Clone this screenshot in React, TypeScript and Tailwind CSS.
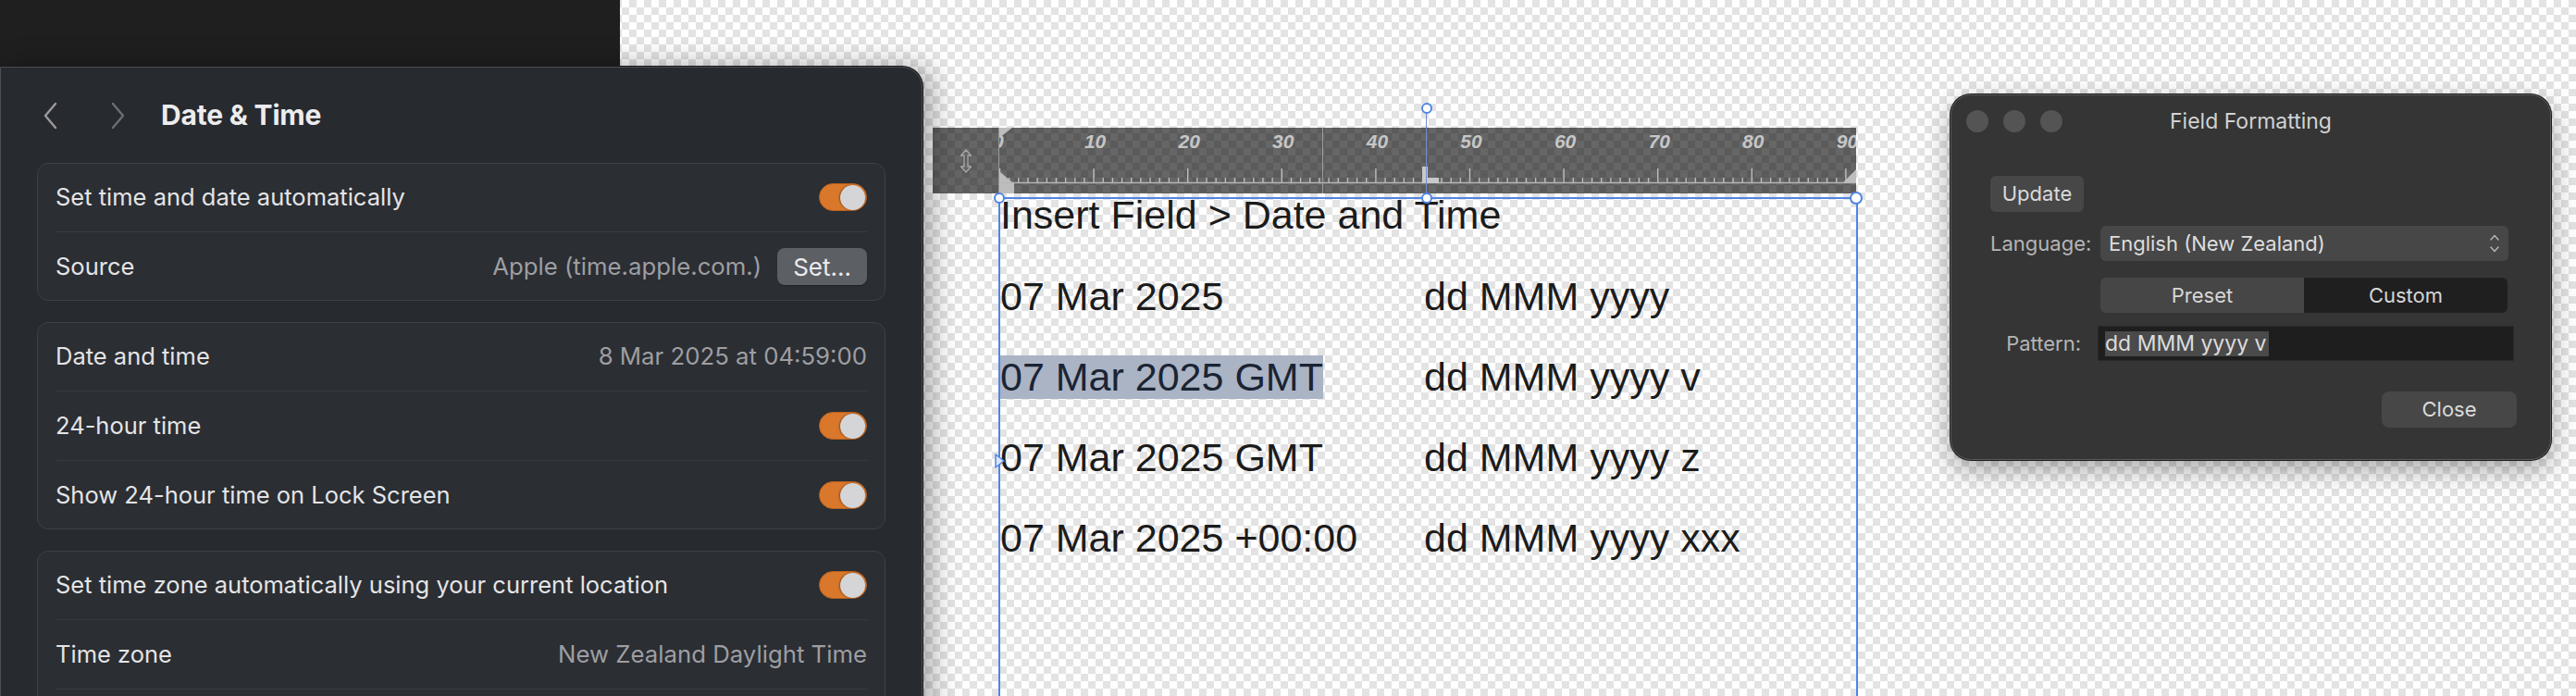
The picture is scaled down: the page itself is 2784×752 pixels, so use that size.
import React from "react";

const ui = "font-['Inter','Noto_Sans',sans-serif]";
const doc = "font-['Liberation_Sans',Arial,sans-serif]";

function Toggle() {
  return (
    <div className="flex h-[30px] w-[52px] items-center justify-end rounded-full border border-[#b8611f] bg-[#d9772b] p-[1px]">
      <div className="h-[27px] w-[27px] rounded-full bg-[#d5d5d7] shadow-[-1px_0_2px_rgba(0,0,0,0.35)]" />
    </div>
  );
}

function Sep() {
  return <div className="mx-[19px] my-[1px] h-px bg-[#383b40]" />;
}

function Row({ label, children }: { label?: string; children?: React.ReactNode }) {
  return (
    <div className="flex h-[72px] items-center justify-between px-[19px]">
      <span className="text-[25.5px] text-[#e4e4e6]">{label}</span>
      <div className="flex items-center gap-[17px]">{children}</div>
    </div>
  );
}

function Value({ text }: { text: string }) {
  return <span className="text-[25.75px] text-[#9e9ea2]">{text}</span>;
}

function Group({ children }: { children: React.ReactNode }) {
  return <div className="rounded-[12px] border border-[#3d4045] bg-[#2b2e33]">{children}</div>;
}

function SettingsWindow() {
  return (
    <div
      className={`absolute left-0 top-[72px] h-[720px] w-[997px] rounded-tr-[22px] border border-[#4b4e53] bg-[#272a2f] shadow-[0_0_0_1px_#151515,10px_0_30px_rgba(0,0,0,0.35)] ${ui}`}
    >
      <div className="flex h-[103px] items-center pl-[44px]">
        <svg width="20" height="30" viewBox="0 0 20 30" className="text-[#9a9a9e]">
          <path d="M15 2 L4 15 L15 28" fill="none" stroke="currentColor" strokeWidth="2.4" strokeLinecap="round" strokeLinejoin="round" />
        </svg>
        <svg width="20" height="30" viewBox="0 0 20 30" className="ml-[52px] text-[#6d6e72]">
          <path d="M5 2 L16 15 L5 28" fill="none" stroke="currentColor" strokeWidth="2.4" strokeLinecap="round" strokeLinejoin="round" />
        </svg>
        <span className="ml-[37px] text-[30px] font-bold tracking-[-0.2px] text-[#ececee]">Date &amp; Time</span>
      </div>
      <div className="flex flex-col gap-[23px] px-[39px]">
        <Group>
          <Row label="Set time and date automatically">
            <Toggle />
          </Row>
          <Sep />
          <Row label="Source">
            <Value text="Apple (time.apple.com.)" />
            <div className="flex h-[40px] items-center rounded-[8px] bg-[#5c5f64] px-[17px] text-[26px] text-[#ebebed] shadow-[0_1px_1px_rgba(0,0,0,0.3)]">
              Set...
            </div>
          </Row>
        </Group>
        <Group>
          <Row label="Date and time">
            <Value text="8 Mar 2025 at 04:59:00" />
          </Row>
          <Sep />
          <Row label="24-hour time">
            <Toggle />
          </Row>
          <Sep />
          <Row label="Show 24-hour time on Lock Screen">
            <Toggle />
          </Row>
        </Group>
        <Group>
          <Row label="Set time zone automatically using your current location">
            <Toggle />
          </Row>
          <Sep />
          <Row label="Time zone">
            <Value text="New Zealand Daylight Time" />
          </Row>
          <Sep />
          <Row />
        </Group>
      </div>
    </div>
  );
}

function Ruler() {
  const ticks = [];
  for (let i = 0; i <= 91; i++) {
    const x = i * 10.16;
    const major = i % 10 === 0;
    ticks.push(
      <line key={i} x1={x + 0.5} x2={x + 0.5} y1={major ? 44 : 54} y2={59} stroke="#bdbdbd" strokeWidth={1.4} />
    );
  }
  const nums = [10, 20, 30, 40, 50, 60, 70, 80, 90];
  return (
    <div className="absolute left-[1008px] top-[138px] flex h-[71px] w-[998px] bg-black/60">
      <div className="flex w-[72px] items-center justify-center border-r border-[#9a9a9a]">
        <svg width="14" height="26" viewBox="0 0 14 26">
          <path
            d="M7 1 L12.5 7 L9 7 L9 19 L12.5 19 L7 25 L1.5 19 L5 19 L5 7 L1.5 7 Z"
            fill="none"
            stroke="#a8a8a8"
            strokeWidth="1.3"
            strokeLinejoin="round"
          />
        </svg>
      </div>
      <svg width="926" height="71" viewBox="0 0 926 71" className="block">
        <text x="-7" y="22" fill="#c6c6c6" fontSize="21" fontWeight="bold" fontStyle="italic" fontFamily="Liberation Sans, Arial, sans-serif">
          0
        </text>
        {nums.map((n) => (
          <text
            key={n}
            x={n * 10.16 + 2}
            y="22"
            textAnchor="middle"
            fill="#c6c6c6"
            fontSize="21"
            fontWeight="bold"
            fontStyle="italic"
            fontFamily="Liberation Sans, Arial, sans-serif"
          >
            {n}
          </text>
        ))}
        <line x1="0" x2="926" y1="59.5" y2="59.5" stroke="#b5b5b5" strokeWidth="1.5" />
        {ticks}
        <line x1="349.5" x2="349.5" y1="0" y2="71" stroke="#9c9c9c" strokeWidth="1" />
        <path d="M0 0 L14 0 L0 11 Z" fill="#bdbdbd" />
        <path d="M0 47 L14 59 L0 59 Z" fill="#bdbdbd" />
        <rect x="0" y="60" width="16" height="11" fill="#bdbdbd" />
        <path d="M457 42 L463 42 L463 54 L475 54 L475 60 L457 60 Z" fill="#c8c8c8" />
        <path d="M926 45 L926 59 L912 59 Z" fill="#bdbdbd" />
      </svg>
    </div>
  );
}

function TextFrame() {
  const rows: [string, string, boolean][] = [
    ["07 Mar 2025", "dd MMM yyyy", false],
    ["07 Mar 2025 GMT", "dd MMM yyyy v", true],
    ["07 Mar 2025 GMT", "dd MMM yyyy z", false],
    ["07 Mar 2025 +00:00", "dd MMM yyyy xxx", false],
  ];
  return (
    <>
      {/* rotation handle */}
      <div className="absolute left-[1541px] top-[122px] h-[92px] w-px bg-[#6f8fcf]" />
      <div className="absolute left-[1536px] top-[111px] h-[12px] w-[12px] rounded-full border-2 border-[#4f86e4] bg-white" />
      <div className={`absolute left-[1079px] top-[213px] h-[560px] w-[929px] border-x-2 border-t-2 border-[#4f86e4] ${doc} text-[43px] text-[#1b1b1b]`}>
        <div className="h-[34px] leading-[34px]">Insert Field &gt; Date and Time</div>
        <div className="mt-[28px]">
          {rows.map(([a, b, sel], i) => (
            <div key={i} className="grid h-[87px] grid-cols-[458px_1fr] items-center">
              <div>
                <span className={sel ? "inline-block h-[47px] bg-[#aab4c5] leading-[47px] text-[#1b2433]" : ""}>{a}</span>
              </div>
              <div>{b}</div>
            </div>
          ))}
        </div>
      </div>
      <div className="absolute left-[1074px] top-[208px] h-[12px] w-[12px] rounded-full border-2 border-[#4f86e4] bg-white" />
      <div className="absolute left-[1536px] top-[208px] h-[12px] w-[12px] rounded-full border-2 border-[#4f86e4] bg-white" />
      <div className="absolute left-[1999px] top-[207px] h-[14px] w-[14px] rounded-full border-2 border-[#4f86e4] bg-white" />
      <svg className="absolute left-[1075px] top-[490px]" width="12" height="16" viewBox="0 0 12 16">
        <path d="M1 1 L10 8 L1 15 Z" fill="#dce6fa" stroke="#4f86e4" strokeWidth="1.5" strokeLinejoin="round" />
      </svg>
    </>
  );
}

function FieldFormatting() {
  return (
    <div
      className={`absolute left-[2108px] top-[102px] flex h-[395px] w-[649px] flex-col rounded-[22px] border border-[#5a5a5a] bg-[#353535] shadow-[0_0_0_1px_#1c1c1c,0_10px_30px_rgba(0,0,0,0.35)] ${ui}`}
    >
      <div className="relative flex h-[56px] items-center gap-[16px] pl-[16px]">
        <div className="h-[24px] w-[24px] rounded-full bg-[#545454]" />
        <div className="h-[24px] w-[24px] rounded-full bg-[#545454]" />
        <div className="h-[24px] w-[24px] rounded-full bg-[#545454]" />
        <span className="absolute left-0 right-0 text-center text-[23px] text-[#d2d2d2]">Field Formatting</span>
      </div>
      <div className="flex flex-col pl-[42px] pr-[36px] text-[22px]">
        <div className="mt-[31px] flex h-[39px] w-[101px] items-center justify-center rounded-[6px] bg-[#474747] text-[#dadada]">
          Update
        </div>
        <div className="mt-[15px] flex h-[38px] items-center">
          <span className="w-[98px] text-right text-[#b5b5b5]">Language:</span>
          <div className="ml-[21px] flex h-[38px] w-[441px] items-center justify-between rounded-[6px] bg-[#474747] pl-[9px] pr-[10px] text-[#dedede]">
            <span>English (New Zealand)</span>
            <svg width="10" height="22" viewBox="0 0 10 22">
              <path d="M1 7 L5 2.5 L9 7 M1 15 L5 19.5 L9 15" fill="none" stroke="#bcbcbc" strokeWidth="1.3" strokeLinecap="round" strokeLinejoin="round" />
            </svg>
          </div>
        </div>
        <div className="ml-[119px] mt-[18px] flex h-[38px] w-[440px] overflow-hidden rounded-[6px]">
          <div className="flex flex-1 items-center justify-center bg-[#464646] text-[#d6d6d6]">Preset</div>
          <div className="flex flex-1 items-center justify-center bg-[#1f1f1f] text-[#d6d6d6]">Custom</div>
        </div>
        <div className="mt-[14px] flex h-[38px] items-center">
          <span className="w-[98px] text-right text-[#b5b5b5]">Pattern:</span>
          <div className="ml-[18px] flex h-[38px] w-[450px] items-center border border-[#2a2a2a] bg-[#1e1e1e] pl-[7px]">
            <span className="inline-block h-[27px] bg-[#4a4a4a] pr-[2px] text-[23px] leading-[27px] text-[#dcdcdc]">dd MMM yyyy v</span>
          </div>
        </div>
        <div className="mt-[33px] flex justify-end">
          <div className="flex h-[39px] w-[146px] items-center justify-center rounded-[8px] bg-[#474747] text-[#dadada]">
            Close
          </div>
        </div>
      </div>
    </div>
  );
}

export default function App() {
  return (
    <div className="relative h-[752px] w-[2784px] overflow-hidden bg-white bg-[image:conic-gradient(#e3e3e3_25%,#ffffff_0_50%,#e3e3e3_0_75%,#ffffff_0)] bg-[length:16px_16px]">
      <div className="absolute left-0 top-0 h-[72px] w-[670px] bg-[#1f1f1f]" />
      <Ruler />
      <TextFrame />
      <SettingsWindow />
      <FieldFormatting />
    </div>
  );
}
